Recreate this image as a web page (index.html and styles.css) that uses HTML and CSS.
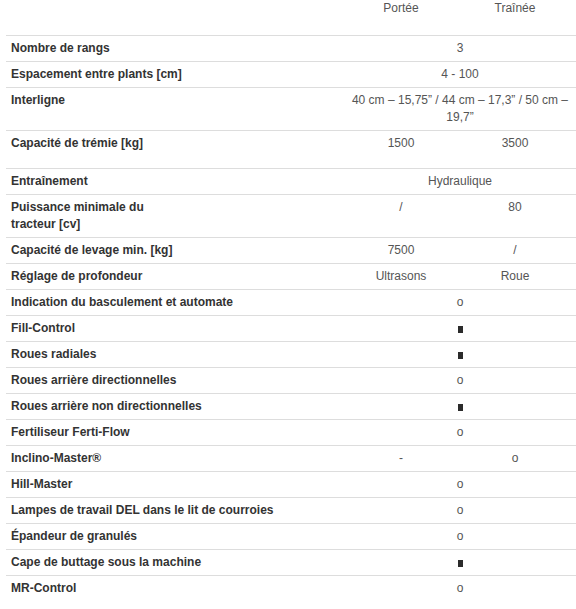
FILE: index.html
```html
<!DOCTYPE html>
<html lang="fr">
<head>
<meta charset="utf-8">
<title>Caractéristiques techniques</title>
<link rel="stylesheet" href="styles.css">
</head>
<body>
<table class="specs">
  <colgroup>
    <col class="c-label">
    <col class="c-a">
    <col class="c-b">
  </colgroup>
  <thead>
    <tr>
      <th class="head-empty"></th>
      <th class="head a">Portée</th>
      <th class="head b">Traînée</th>
    </tr>
  </thead>
  <tbody>
    <tr><td class="label">Nombre de rangs</td><td class="val both" colspan="2">3</td></tr>
    <tr><td class="label">Espacement entre plants [cm]</td><td class="val both" colspan="2">4 - 100</td></tr>
    <tr><td class="label">Interligne</td><td class="val both" colspan="2">40 cm – 15,75” / 44 cm – 17,3” / 50 cm – 19,7”</td></tr>
    <tr class="tall"><td class="label">Capacité de trémie [kg]</td><td class="val a">1500</td><td class="val b">3500</td></tr>
    <tr><td class="label">Entraînement</td><td class="val both" colspan="2">Hydraulique</td></tr>
    <tr><td class="label">Puissance minimale du<br>tracteur [cv]</td><td class="val a">/</td><td class="val b">80</td></tr>
    <tr><td class="label">Capacité de levage min. [kg]</td><td class="val a">7500</td><td class="val b">/</td></tr>
    <tr><td class="label">Réglage de profondeur</td><td class="val a">Ultrasons</td><td class="val b">Roue</td></tr>
    <tr><td class="label">Indication du basculement et automate</td><td class="val both" colspan="2">o</td></tr>
    <tr><td class="label">Fill-Control</td><td class="val both" colspan="2"><span class="sq" aria-label="■"></span></td></tr>
    <tr><td class="label">Roues radiales</td><td class="val both" colspan="2"><span class="sq" aria-label="■"></span></td></tr>
    <tr><td class="label">Roues arrière directionnelles</td><td class="val both" colspan="2">o</td></tr>
    <tr><td class="label">Roues arrière non directionnelles</td><td class="val both" colspan="2"><span class="sq" aria-label="■"></span></td></tr>
    <tr><td class="label">Fertiliseur Ferti-Flow</td><td class="val both" colspan="2">o</td></tr>
    <tr><td class="label">Inclino-Master®</td><td class="val a">-</td><td class="val b">o</td></tr>
    <tr><td class="label">Hill-Master</td><td class="val both" colspan="2">o</td></tr>
    <tr><td class="label">Lampes de travail DEL dans le lit de courroies</td><td class="val both" colspan="2">o</td></tr>
    <tr><td class="label">Épandeur de granulés</td><td class="val both" colspan="2">o</td></tr>
    <tr><td class="label">Cape de buttage sous la machine</td><td class="val both" colspan="2"><span class="sq" aria-label="■"></span></td></tr>
    <tr><td class="label">MR-Control</td><td class="val both" colspan="2">o</td></tr>
  </tbody>
</table>
</body>
</html>
```
FILE: styles.css
```css
html, body {
  margin: 0;
  padding: 0;
  background: #ffffff;
}

body {
  font-family: "Liberation Sans", Arial, sans-serif;
  font-size: 12px;
  line-height: 17px;
  color: #333333;
  overflow: hidden;
}

.specs {
  margin-left: 6px;
  width: 570px;
  border-collapse: separate;
  border-spacing: 0;
  table-layout: fixed;
}

.c-label { width: 338px; }
.c-a { width: 114px; }
.c-b { width: 118px; }

.specs th,
.specs td {
  vertical-align: top;
  text-align: left;
}

.head-empty,
.head {
  padding: 0 5px 18px;
  font-weight: normal;
  color: #555555;
}

.specs td {
  border-top: 1px solid #dddddd;
  padding: 4px 5px;
}

.label {
  font-weight: bold;
  color: #333333;
}

.specs .val,
.specs .head {
  text-align: center;
  color: #555555;
}

.specs .b {
  padding-right: 9px;
}

.specs .both {
  padding-right: 5px;
}

.specs tr.tall td {
  padding-bottom: 16px;
}

.sq {
  display: inline-block;
  width: 5px;
  height: 7px;
  background: #2b2b2b;
  vertical-align: -1px;
}
```
